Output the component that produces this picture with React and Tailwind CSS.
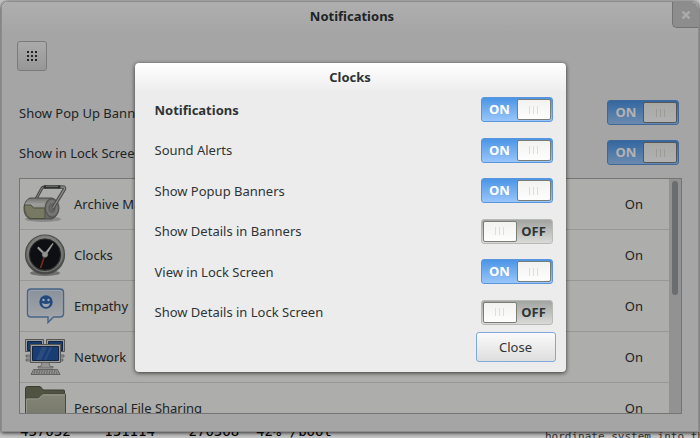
import { useState } from 'react';

const apps = [
  { name: 'Archive Manager', Icon: ArchiveIcon },
  { name: 'Clocks', Icon: ClocksIcon },
  { name: 'Empathy', Icon: EmpathyIcon },
  { name: 'Network', Icon: NetworkIcon },
  { name: 'Personal File Sharing', Icon: FolderIcon },
];

const clockOptions = [
  { label: 'Notifications', on: true, bold: true },
  { label: 'Sound Alerts', on: true },
  { label: 'Show Popup Banners', on: true },
  { label: 'Show Details in Banners', on: false },
  { label: 'View in Lock Screen', on: true },
  { label: 'Show Details in Lock Screen', on: false },
];

function ArchiveIcon() {
  return (
    <svg viewBox="0 0 44 44" className="size-11 shrink-0" aria-hidden="true">
      <defs>
        <linearGradient id="drum" x1="0" y1="0" x2="0" y2="1">
          <stop offset="0" stopColor="#a0a29d" />
          <stop offset=".3" stopColor="#e2e2df" />
          <stop offset="1" stopColor="#8d8f89" />
        </linearGradient>
        <radialGradient id="drumEnd">
          <stop offset="0" stopColor="#c5c7c2" />
          <stop offset=".35" stopColor="#858783" />
          <stop offset=".7" stopColor="#b0b2ad" />
          <stop offset="1" stopColor="#7d7f7a" />
        </radialGradient>
      </defs>
      <ellipse cx="20" cy="37" rx="18" ry="3" fill="#000" opacity=".2" />
      <path d="M13 17 19 6q.5-1 2-1h2" fill="none" stroke="#6c6e6a" strokeWidth="3" />
      <path d="M13 17 19 6q.5-1 2-1h2" fill="none" stroke="#b8bab5" />
      <path d="M7 16h22c8 3 8 18 0 21H7C-1 34-1 19 7 16z" fill="url(#drum)" stroke="#6c6e6a" />
      <path d="M1.500 23H8l2.500 3H22v10.500H8C3.500 35 1 30 1.500 23z" fill="#abae8d" stroke="#6f7259" />
      <ellipse cx="29" cy="26" rx="7" ry="9.500" fill="url(#drumEnd)" stroke="#747671" />
      <path d="M30 26 41.500 7q.5-2-1.500-2h-4" fill="none" stroke="#6c6e6a" strokeWidth="3.400" strokeLinecap="round" />
      <path d="M30 26 41.500 7q.5-2-1.500-2h-4" fill="none" stroke="#c5c7c2" strokeWidth="1.400" strokeLinecap="round" />
      <path d="M22 5h14" stroke="#424542" strokeWidth="3.400" strokeLinecap="round" />
      <path d="M23 4.500h12" stroke="#92948f" />
    </svg>
  );
}

function ClocksIcon() {
  return (
    <svg viewBox="0 0 44 44" className="size-11 shrink-0" aria-hidden="true">
      <defs>
        <linearGradient id="rim" x1="0" y1="0" x2="0" y2="1">
          <stop offset="0" stopColor="#b5b7b2" />
          <stop offset=".6" stopColor="#8d8f8b" />
          <stop offset="1" stopColor="#5f615d" />
        </linearGradient>
      </defs>
      <ellipse cx="22" cy="40" rx="15" ry="3" fill="#000" opacity=".35" />
      <circle cx="22" cy="21.500" r="19.500" fill="url(#rim)" stroke="#6b6d69" strokeWidth="1.200" />
      <circle cx="22" cy="21.500" r="17.200" fill="none" stroke="#c0c2bd" strokeWidth=".8" />
      <circle cx="22" cy="21.500" r="15.600" fill="#14161c" stroke="#3d3f40" />
      <path d="m21.500 23-4 12" stroke="#a83e2a" strokeWidth="1.600" />
      <path d="m22 21.500-6.500-6.500" stroke="#dededc" strokeWidth="2.200" strokeLinecap="round" />
      <path d="m21 21 8.500-11 1 .8L23.500 22z" fill="#dededc" />
      <circle cx="22" cy="21.500" r="2.800" fill="#d3d4d1" stroke="#a0a29e" strokeWidth=".6" />
    </svg>
  );
}

function EmpathyIcon() {
  return (
    <svg viewBox="0 0 44 44" className="size-11 shrink-0" aria-hidden="true">
      <defs>
        <linearGradient id="bubble" x1="0" y1="0" x2="0" y2="1">
          <stop offset="0" stopColor="#c3d0e0" />
          <stop offset="1" stopColor="#eef0f2" />
        </linearGradient>
      </defs>
      <path
        d="M8 5h29q3.500 0 3.500 3.500v21q0 3.500-3.500 3.500h-6.500L25 38.500V33H8q-3.500 0-3.500-3.500v-21Q4.500 5 8 5z"
        fill="url(#bubble)"
        stroke="#6691c4"
        strokeWidth="1.400"
      />
      <path d="M8 6.500h29q2 0 2 2v20.500q0 2.500-2 2.500H8q-2 0-2-2.500V8.500q0-2 2-2z" fill="none" stroke="#e8eef5" strokeWidth=".8" />
      <circle cx="23" cy="18" r="6.700" fill="#3069b8" />
      <circle cx="20.500" cy="16" r="1.200" fill="#e8eef5" />
      <circle cx="25.500" cy="16" r="1.200" fill="#e8eef5" />
      <path d="M19 19q4 2 8 0-.5 4-4 4t-4-4z" fill="#e8eef5" />
    </svg>
  );
}

function NetworkIcon() {
  return (
    <svg viewBox="0 0 44 44" className="size-11 shrink-0" aria-hidden="true">
      <g stroke="#7b7d79">
        <path d="M3 20h8v2H3zM3 24h8v2H3zM34 20h7v2h-7zM33 24h7v2h-7z" fill="#d3d4d1" strokeWidth=".7" />
        <path d="M2.500 4.500h18v12h-18zM23.500 4.500h18v12h-18z" fill="#dcdddb" />
        <path d="M4.500 6.500h14v9h-14zM25.500 6.500h14v9h-14z" fill="#24549c" stroke="#1b3660" />
        <path d="M7.500 9.500h30v18h-30z" fill="#e3e4e1" />
        <path d="M9.500 11.500h26v14h-26z" fill="#2459a8" stroke="#1b3660" />
        <path d="M19 27.500h7l1 4h3v1.500H15V31.500h3z" fill="#d3d4d1" strokeWidth=".7" />
        <path d="M10.500 34.500h24l2.500 5H8z" fill="#d3d4d1" strokeWidth=".8" />
      </g>
      <path d="M19 12h5l-6 13h-5zM27 12h2l-6 13h-2z" fill="#fff" opacity=".13" />
      <path d="M11 36h23M10.500 38h24" stroke="#7b7d79" strokeDasharray="1.500 1" />
    </svg>
  );
}

function FolderIcon() {
  return (
    <svg viewBox="0 0 44 44" className="size-11 shrink-0" aria-hidden="true">
      <defs>
        <linearGradient id="folder" x1="0" y1="0" x2="0" y2="1">
          <stop offset="0" stopColor="#bdbfab" />
          <stop offset="1" stopColor="#a2a58d" />
        </linearGradient>
      </defs>
      <path d="M2.500 43V2.500q0-2 2-2H16q2 0 3 2l1 1.500h20.500q1 0 1 1V43z" fill="#74775f" stroke="#555745" />
      <path d="M2.500 43V13q0-1 1.500-1h10q2 0 3-1.500l2-2q1-1 3-1h19.500q1 0 1 1V43z" fill="url(#folder)" stroke="#686b56" />
      <path d="M3.500 42V13h12l4-4h22" fill="none" stroke="#d4d6c6" />
    </svg>
  );
}

function Switch({ id, defaultOn }) {
  const [on, setOn] = useState(defaultOn);

  return (
    <label
      htmlFor={id}
      className={`flex h-[25px] w-[72px] shrink-0 cursor-pointer items-stretch rounded-[3px] border p-px ${
        on
          ? 'border-[#5b96dc] bg-linear-to-b from-[#4a94e6] to-[#99c6fa]'
          : 'flex-row-reverse border-[#b9bab8] bg-linear-to-b from-[#a2a4a1] to-[#dadbd9]'
      }`}
    >
      <input id={id} type="checkbox" role="switch" className="sr-only" checked={on} onChange={() => setOn(!on)} />
      <span
        aria-hidden="true"
        className={`flex flex-1 items-center justify-center text-[13px] leading-none font-bold ${
          on ? 'text-white' : 'text-[#2e3436]'
        }`}
      >
        {on ? 'ON' : 'OFF'}
      </span>
      <span className="flex w-[34px] items-center justify-center gap-[3px] rounded-[2px] border border-[#7b7d79] bg-linear-to-b from-[#f2f2f0] to-[#fefefe]">
        <i className="h-2 w-px bg-[#dededb]" />
        <i className="h-2 w-px bg-[#dededb]" />
        <i className="h-2 w-px bg-[#dededb]" />
      </span>
    </label>
  );
}

function ClocksDialog() {
  return (
    <div
      role="dialog"
      aria-labelledby="clocks-title"
      className="w-full max-w-[431px] rounded-[4px] bg-[#ececec] bg-linear-to-b from-white to-[#ececec] to-[30px] pb-[10px] shadow-[0_1px_4px_rgba(0,0,0,0.7)]"
    >
      <h2 id="clocks-title" className="pt-[2px] text-center text-[13px] leading-6 font-bold">
        Clocks
      </h2>
      <div className="mt-2 flex min-h-[228px] flex-col justify-between pr-[13px] pl-5">
        {clockOptions.map((option, i) => (
          <div key={option.label} className="flex items-center justify-between">
            <label htmlFor={`clock-${i}`} className={option.bold ? 'font-bold' : ''}>
              {option.label}
            </label>
            <Switch id={`clock-${i}`} defaultOn={option.on} />
          </div>
        ))}
      </div>
      <div className="mt-[7px] flex justify-end pr-[10px]">
        <button
          type="button"
          className="h-[30px] w-20 rounded-[3px] border border-[#7fa9dc] bg-linear-to-b from-[#fafafa] to-[#dedede]"
        >
          Close
        </button>
      </div>
    </div>
  );
}

export default function App() {
  return (
    <div className="flex h-screen flex-col overflow-hidden bg-[#c6c6c6] pt-px font-['Noto_Sans',sans-serif] text-[13px] leading-5 text-[#2e3436]">
      <main className="relative z-10 mx-px flex min-h-0 flex-1 flex-col overflow-hidden rounded-t-[7px] border border-[#8d8d8d] bg-[#ededed] bg-linear-to-b from-[#fafafa] to-[#ededed] to-[32px] shadow-[0_1px_4px_rgba(0,0,0,0.8)]">
        <header className="flex items-start">
          <span className="w-[30px]" />
          <h1 className="flex-1 pt-1 text-center leading-5 font-bold">Notifications</h1>
          <button
            type="button"
            aria-label="Close window"
            className="flex h-[26px] w-[26px] items-center justify-center rounded-bl-[5px] border-b border-l border-[#a5a5a5] bg-[#cbcbcb]"
          >
            <svg viewBox="0 0 10 10" className="size-[10px]" aria-hidden="true">
              <path d="m1.500 1.500 7 7M8.500 1.500l-7 7" stroke="#f5f5f5" strokeWidth="2.400" />
            </svg>
          </button>
        </header>

        <div className="px-[15px] pt-[13px]">
          <button
            type="button"
            aria-label="All settings"
            className="flex size-[30px] items-center justify-center rounded-[3px] border border-[#b0b0b0] bg-linear-to-b from-[#f4f4f4] to-[#d8d8d8]"
          >
            <svg viewBox="0 0 10 10" className="size-[10px]" fill="#2e3436" aria-hidden="true">
              <path d="M0 0h2v2H0zM4 0h2v2H4zM8 0h2v2H8zM0 4h2v2H0zM4 4h2v2H4zM8 4h2v2H8zM0 8h2v2H0zM4 8h2v2H4zM8 8h2v2H8z" />
            </svg>
          </button>
        </div>

        <div className="mt-[29px] flex flex-col gap-[15px] pr-[19px] pl-[17px]">
          <div className="flex items-center justify-between">
            <label htmlFor="banners">Show Pop Up Banners</label>
            <Switch id="banners" defaultOn />
          </div>
          <div className="flex items-center justify-between">
            <label htmlFor="lock-screen">Show in Lock Screen</label>
            <Switch id="lock-screen" defaultOn />
          </div>
        </div>

        <div className="mt-[13px] mr-4 mb-[17px] ml-[17px] flex min-h-0 flex-1 overflow-hidden border border-[#a8a8a8] bg-[#f8f8f5]">
          <ul className="min-w-0 flex-1">
            {apps.map(({ name, Icon }) => (
              <li key={name} className="flex h-[51px] items-center border-b border-[#d9d9d7] pr-[26px] pl-[3px]">
                <Icon />
                <span className="ml-[7px] flex-1">{name}</span>
                <span>On</span>
              </li>
            ))}
          </ul>
          <div className="w-3 bg-[#d1d1d1] px-[3px] pt-[2px]">
            <div className="h-[114px] rounded-full bg-[#9a9da0]" />
          </div>
        </div>

        <div className="absolute inset-0 flex items-center justify-center bg-black/30 px-4 pt-[2px]">
          <ClocksDialog />
        </div>
      </main>

      {/* terminal and editor peeking out under the window */}
      <div className="flex h-[6px] shrink-0 items-end justify-between overflow-hidden text-black">
        <pre className="pl-5 font-['DejaVu_Sans_Mono',monospace] text-[14px] leading-[14px]">
          {'437632    131114    276368  42% /boot'}
        </pre>
        <pre className="h-[6px] w-[155px] font-['DejaVu_Sans_Mono',monospace] text-[11px] leading-[10px] text-[#333]">
          hordinate system into the
        </pre>
      </div>
    </div>
  );
}
